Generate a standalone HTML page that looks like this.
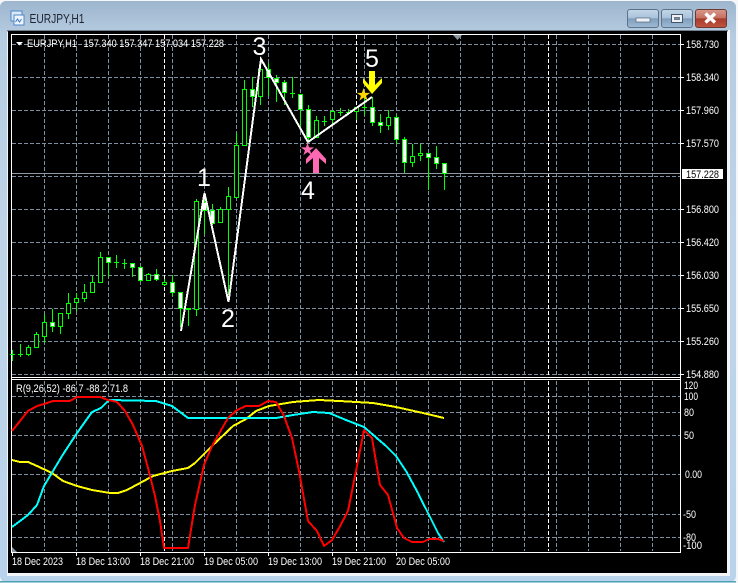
<!DOCTYPE html>
<html><head><meta charset="utf-8"><style>
html,body{margin:0;padding:0;background:#fff}
svg{display:block}
text{font-family:"Liberation Sans",Arial,sans-serif}
.a{font-size:11px;fill:#fff}
</style></head><body>
<svg xmlns="http://www.w3.org/2000/svg" width="738" height="583" viewBox="0 0 738 583">
<defs>
<linearGradient id="w" x1="0" y1="0" x2="0" y2="1"><stop offset="0" stop-color="#9db6ce"/><stop offset=".06" stop-color="#b6cce1"/><stop offset=".4" stop-color="#bfd4e8"/><stop offset="1" stop-color="#b9d3ec"/></linearGradient>
<linearGradient id="b" x1="0" y1="0" x2="0" y2="1"><stop offset="0" stop-color="#c3d6e8"/><stop offset=".48" stop-color="#a9c2da"/><stop offset=".5" stop-color="#7f9cb9"/><stop offset="1" stop-color="#9dbbd6"/></linearGradient>
<linearGradient id="c" x1="0" y1="0" x2="0" y2="1"><stop offset="0" stop-color="#d8998c"/><stop offset=".48" stop-color="#c56f5f"/><stop offset=".5" stop-color="#a83a2a"/><stop offset="1" stop-color="#bf5540"/></linearGradient>
</defs>
<rect width="738" height="583" fill="#f4f6f8"/>
<rect x="0" y="1" width="736" height="581" rx="6" fill="url(#w)"/>
<rect x="0" y="581" width="736" height="1.5" fill="#4ba3b5"/>
<rect x="7" y="30" width="723" height="546" fill="#f2f5f8"/>
<rect x="7" y="30" width="721" height="1.5" fill="#6f7f8e"/>
<rect x="8" y="31" width="719" height="542" fill="#000"/>

<!-- title -->
<rect x="11" y="11" width="11" height="10" fill="#dbe9f7" stroke="#4f86c8"/>
<rect x="14" y="15" width="10" height="10" fill="#eef5fc" stroke="#4f86c8"/>
<path d="M15.500 22l2-3 2 3 2-3" fill="none" stroke="#3a76c0"/>
<text x="29.500" y="23" font-size="13" fill="#1c2430" textLength="55" lengthAdjust="spacingAndGlyphs">EURJPY,H1</text>

<!-- window buttons -->
<rect x="627.500" y="9.500" width="31" height="18" rx="2.500" fill="url(#b)" stroke="#5d7287"/>
<rect x="636" y="18" width="14" height="4" fill="#eef2f6" stroke="#55677a" stroke-width=".7"/>
<rect x="661.500" y="9.500" width="31" height="18" rx="2.500" fill="url(#b)" stroke="#5d7287"/>
<rect x="671.500" y="14.500" width="11" height="8" fill="#eef2f6" stroke="#44566a"/>
<rect x="674.500" y="17.500" width="5" height="2" fill="#7b93ab" stroke="#44566a" stroke-width=".7"/>
<rect x="695.500" y="9.500" width="31" height="18" rx="2.500" fill="url(#c)" stroke="#6d3a33"/>
<path d="M705.500 13.500l9.500 9M715 13.500l-9.500 9" stroke="#fff" stroke-width="3.400" fill="none"/>

<!-- grid -->
<g stroke="#7d8fa1" stroke-width="1" stroke-dasharray="4 2" fill="none" shape-rendering="crispEdges">
<path d="M12 44.500H680M12 77.500H680M12 110.500H680M12 143.500H680M12 176.500H680M12 209.500H680M12 242.500H680M12 275.500H680M12 308.500H680M12 341.500H680M12 374.500H680"/>
<path d="M12 396.500H680M12 412.500H680M12 435.500H680M12 474.500H680M12 514.500H680M12 537.500H680"/>
<path d="M44.500 35V377M76.500 35V377M108.500 35V377M140.500 35V377M172.500 35V377M204.500 35V377M236.500 35V377M268.500 35V377M300.500 35V377M332.500 35V377M364.500 35V377M396.500 35V377M428.500 35V377M460.500 35V377M492.500 35V377M524.500 35V377M556.500 35V377M588.500 35V377M620.500 35V377M652.500 35V377"/>
<path d="M44.500 381V551M76.500 381V551M108.500 381V551M140.500 381V551M172.500 381V551M204.500 381V551M236.500 381V551M268.500 381V551M300.500 381V551M332.500 381V551M364.500 381V551M396.500 381V551M428.500 381V551M460.500 381V551M492.500 381V551M524.500 381V551M556.500 381V551M588.500 381V551M620.500 381V551M652.500 381V551"/>
</g>
<g stroke="#fff" stroke-width="1" stroke-dasharray="4 2" fill="none" shape-rendering="crispEdges">
<path d="M164.500 35V377M356.500 35V377M548.500 35V377M164.500 381V551M356.500 381V551M548.500 381V551"/>
</g>
<!-- price line -->
<path d="M12 173.500H681" stroke="#8f9aa5" stroke-width="1" shape-rendering="crispEdges"/>

<!-- frames -->
<g stroke="#fff" stroke-width="1" fill="none" shape-rendering="crispEdges">
<path d="M11.500 34.500H680.500V552.500H11.500ZM11.500 377.500H680.500M11.500 379.500H680.500"/>
<path d="M681 44.500h3M681 77.500h3M681 110.500h3M681 143.500h3M681 209.500h3M681 242.500h3M681 275.500h3M681 308.500h3M681 341.500h3M681 374.500h3"/>
<path d="M12.500 553v3M76.500 553v3M140.500 553v3M204.500 553v3M268.500 553v3M332.500 553v3M396.500 553v3"/>
</g>

<!-- markers -->
<path d="M16 42h7l-3.500 3.500z" fill="#fff"/>
<path d="M453 35h9l-4.500 5z" fill="#8b97a3"/>
<path d="M12 547v5h5z" fill="#8b97a3"/>

<!-- candle wicks -->
<g shape-rendering="crispEdges">
<path fill="none" stroke="#00ff00" stroke-width="1" d="M12.500 350V361M20.500 344V357M28.500 345V356M36.500 332V348M44.500 314V343M52.500 309V332M60.500 313V334M68.500 293V319M76.500 293V311M84.500 284V302M92.500 276V293M100.500 252V282M108.500 257V277M116.500 255V268M124.500 259V269M132.500 263V277M140.500 266V282M148.500 273V281M156.500 269V281M164.500 279V286M172.500 275V296M180.500 292V327M188.500 308V326M196.500 199V316M204.500 197V234M212.500 204V225M220.500 207V223M228.500 187V295M236.500 133V198M244.500 80V145M252.500 77V107M260.500 60V105M268.500 63V96M276.500 75V102M284.500 80V105M292.500 77V98M300.500 94V130M308.500 105V142M316.500 116V137M324.500 116V126M332.500 110V125M340.500 108V116M348.500 109V115M356.500 107V120M364.500 95V115M372.500 97V126M380.500 114V133M388.500 110V130M396.500 115V144M404.500 137V173M412.500 144V167M420.500 144V161M428.500 153V190M436.500 146V169M444.500 163V190"/>
<path fill="none" stroke="#00ff00" stroke-width="1" d="M10 354.500h5M18 354.500h5M114 262.500h5M122 263.500h5M290 93.500h5M322 121.500h5M338 112.500h5M346 112.500h5M362 107.500h5"/>
<path fill="#000" stroke="#00ff00" stroke-width="1" d="M26.500 347.500h4v7h-4zM34.500 334.500h4v13h-4zM42.500 322.500h4v14h-4zM58.500 313.500h4v13h-4zM66.500 303.500h4v10h-4zM74.500 298.500h4v4h-4zM82.500 292.500h4v6h-4zM90.500 282.500h4v10h-4zM98.500 257.500h4v25h-4zM146.500 274.500h4v6h-4zM162.500 282.500h4v2h-4zM194.500 201.500h4v108h-4zM218.500 209.500h4v13h-4zM226.500 196.500h4v13h-4zM234.500 145.500h4v52h-4zM242.500 89.500h4v56h-4zM258.500 69.500h4v27h-4zM314.500 120.500h4v17h-4zM330.500 111.500h4v8h-4zM354.500 107.500h4v4h-4zM386.500 117.500h4v8h-4zM410.500 156.500h4v6h-4zM418.500 153.500h4v2h-4z"/>
<path fill="#fff" stroke="#00ff00" stroke-width="1" d="M50.500 322.500h4v4h-4zM106.500 257.500h4v5h-4zM130.500 263.500h4v4h-4zM138.500 267.500h4v13h-4zM154.500 274.500h4v5h-4zM170.500 282.500h4v10h-4zM178.500 292.500h4v16h-4zM186.500 308.500h4v1h-4zM202.500 202.500h4v8h-4zM210.500 210.500h4v13h-4zM250.500 89.500h4v7h-4zM266.500 69.500h4v8h-4zM274.500 78.500h4v4h-4zM282.500 82.500h4v10h-4zM298.500 94.500h4v15h-4zM306.500 109.500h4v28h-4zM370.500 107.500h4v15h-4zM378.500 122.500h4v3h-4zM394.500 117.500h4v22h-4zM402.500 139.500h4v23h-4zM426.500 153.500h4v4h-4zM434.500 157.500h4v6h-4zM442.500 163.500h4v10h-4z"/>
</g>

<!-- zigzag -->
<polyline points="181,331 204.500,193 228.500,302 261,59 308,142 372,97" fill="none" stroke="#fff" stroke-width="2" stroke-linejoin="miter" shape-rendering="crispEdges"/>

<!-- arrows, stars -->
<polygon points="316,148 326,159 326,164 319,158 319,173 313,173 313,158 306,164 306,159" fill="#ff69b4"/>
<polygon points="372,94 382,83 382,78 375,85 375,71 369,71 369,85 363,78 363,83" fill="#ffff00"/>
<polygon transform="translate(307.500 149.500)" points="0,-7 1.570,-2.160 6.660,-2.160 2.540,.83 4.120,5.660 0,2.670 -4.120,5.660 -2.540,.83 -6.660,-2.160 -1.570,-2.160" fill="#ff69b4"/>
<polygon transform="translate(363.500 95)" points="0,-7 1.570,-2.160 6.660,-2.160 2.540,.83 4.120,5.660 0,2.670 -4.120,5.660 -2.540,.83 -6.660,-2.160 -1.570,-2.160" fill="#ffd700"/>

<!-- digit labels -->
<g font-size="25" fill="#fff" text-anchor="middle" style="font-family:'Liberation Sans',Arial,sans-serif">
<text x="204" y="186">1</text>
<text x="228" y="327">2</text>
<text x="259.500" y="55">3</text>
<text x="308" y="199">4</text>
<text x="372" y="67">5</text>
</g>

<!-- header text -->
<text class="a" x="27" y="47" textLength="50" lengthAdjust="spacingAndGlyphs">EURJPY,H1</text>
<text class="a" x="83.500" y="47" textLength="140.500" lengthAdjust="spacingAndGlyphs">157.340 157.347 157.034 157.228</text>
<text class="a" x="16" y="392" textLength="112" lengthAdjust="spacingAndGlyphs">R(9,26,52) -86.7 -88.2 71.8</text>

<!-- price axis -->
<text class="a" x="686" y="48" textLength="33" lengthAdjust="spacingAndGlyphs">158.730</text>
<text class="a" x="686" y="81" textLength="33" lengthAdjust="spacingAndGlyphs">158.340</text>
<text class="a" x="686" y="114" textLength="33" lengthAdjust="spacingAndGlyphs">157.960</text>
<text class="a" x="686" y="147" textLength="33" lengthAdjust="spacingAndGlyphs">157.570</text>
<text class="a" x="686" y="213" textLength="33" lengthAdjust="spacingAndGlyphs">156.800</text>
<text class="a" x="686" y="246" textLength="33" lengthAdjust="spacingAndGlyphs">156.420</text>
<text class="a" x="686" y="279" textLength="33" lengthAdjust="spacingAndGlyphs">156.030</text>
<text class="a" x="686" y="312" textLength="33" lengthAdjust="spacingAndGlyphs">155.650</text>
<text class="a" x="686" y="345" textLength="33" lengthAdjust="spacingAndGlyphs">155.260</text>
<text class="a" x="686" y="378" textLength="33" lengthAdjust="spacingAndGlyphs">154.880</text>
<rect x="682" y="169" width="41" height="10" fill="#fff"/>
<text x="686" y="178" font-size="11" fill="#000" textLength="33" lengthAdjust="spacingAndGlyphs">157.228</text>

<!-- sub axis -->
<text class="a" x="684" y="389" textLength="14" lengthAdjust="spacingAndGlyphs">120</text>
<text class="a" x="684" y="400" textLength="14" lengthAdjust="spacingAndGlyphs">100</text>
<text class="a" x="684" y="416" textLength="10" lengthAdjust="spacingAndGlyphs">80</text>
<text class="a" x="684" y="439" textLength="10" lengthAdjust="spacingAndGlyphs">50</text>
<text class="a" x="685" y="478" textLength="17" lengthAdjust="spacingAndGlyphs">0.00</text>
<text class="a" x="683" y="518" textLength="13" lengthAdjust="spacingAndGlyphs">-50</text>
<text class="a" x="683" y="541" textLength="13" lengthAdjust="spacingAndGlyphs">-80</text>
<text class="a" x="683" y="549" textLength="19" lengthAdjust="spacingAndGlyphs">-100</text>

<!-- indicator lines -->
<g fill="none" stroke-width="2" stroke-linejoin="round" shape-rendering="crispEdges">
<polyline stroke="#ffff00" points="12,460 20,462 28,462 37,466 52,473 63,481 77,486 92,490 110,493 118,493 127,490 140,483 153,476 172,471 188,468 195,463 213,445 233,426 246,419 256,411 269,406 293,402 319,400 339,401 373,403 396,407 423,413 444,418"/>
<polyline stroke="#00ffff" points="12,527 28,515 37,505 44,486 53,471 62,456 77,433 92,412 101,408 109,400 156,401 172,406 180,412 188,418 246,418 276,418 293,415 313,412 329,413 346,420 364,427 386,446 396,456 406,471 418,493 428,513 438,533 444,542"/>
<polyline stroke="#ff0000" points="12,431 28,411 37,406 44,404 53,401 70,401 77,397 100,397 108,400 117,402 125,411 133,425 142,446 148,468 155,496 160,521 164,548 188,548 195,505 204,465 212,446 228,418 237,410 246,406 259,406 268,401 276,402 284,416 292,438 299,471 308,521 317,531 324,546 332,540 339,528 348,511 356,471 364,430 372,438 380,485 388,495 397,528 404,538 412,542 423,542 429,539 438,539 444,541"/>
</g>

<!-- time axis -->
<text class="a" x="12" y="565" textLength="51" lengthAdjust="spacingAndGlyphs">18 Dec 2023</text>
<text class="a" x="76" y="565" textLength="54" lengthAdjust="spacingAndGlyphs">18 Dec 13:00</text>
<text class="a" x="140" y="565" textLength="54" lengthAdjust="spacingAndGlyphs">18 Dec 21:00</text>
<text class="a" x="204" y="565" textLength="54" lengthAdjust="spacingAndGlyphs">19 Dec 05:00</text>
<text class="a" x="268" y="565" textLength="54" lengthAdjust="spacingAndGlyphs">19 Dec 13:00</text>
<text class="a" x="332" y="565" textLength="54" lengthAdjust="spacingAndGlyphs">19 Dec 21:00</text>
<text class="a" x="396" y="565" textLength="54" lengthAdjust="spacingAndGlyphs">20 Dec 05:00</text>
</svg>
</body></html>
